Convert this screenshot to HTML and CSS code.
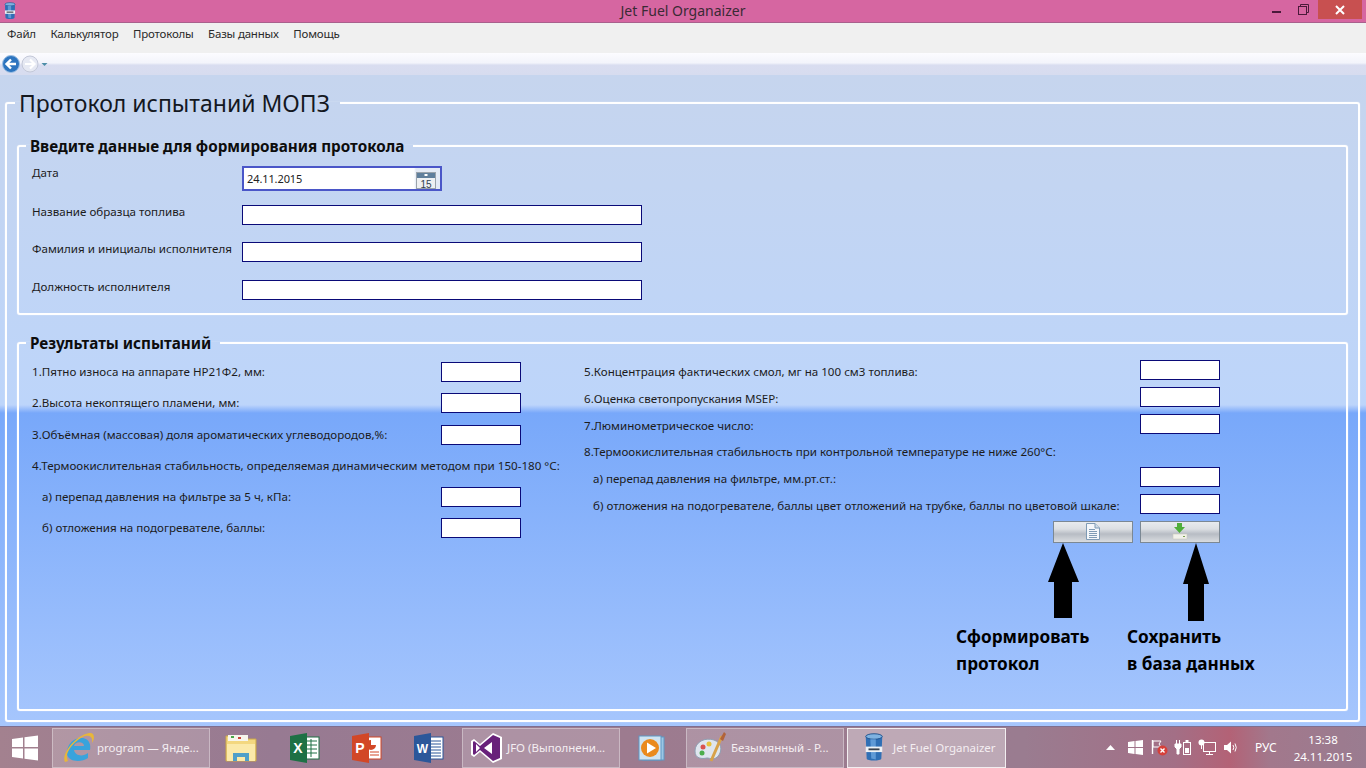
FILE: index.html
```html
<!DOCTYPE html>
<html lang="ru">
<head>
  <meta charset="UTF-8">
  <title>Jet Fuel Organaizer</title>
  <link rel="stylesheet" href="styles.css">
</head>
<body>
  <svg class="defs" width="0" height="0">
    <symbol id="barrel" viewBox="0 0 24 32">
      <path d="M3 4 C3 1 21 1 21 4 L20 28 C20 31 4 31 4 28 Z" fill="#2f6fb5"/>
      <ellipse cx="12" cy="4" rx="9" ry="3" fill="#7fb2e0" stroke="#1d4f8a"/>
      <path d="M8 7 L9 28 L14 29 L14 7 Z" fill="#5f9ad6"/>
      <rect x="3" y="15" width="18" height="6" fill="#eef2f6"/>
      <rect x="6" y="17" width="12" height="2" fill="#39414d"/>
    </symbol>
  </svg>

  <header class="titlebar">
    <div class="title-left">
      <svg class="app-icon" width="14" height="18"><use href="#barrel"/></svg>
    </div>
    <div class="title-text">Jet Fuel Organaizer</div>
    <div class="win-controls">
      <svg class="win-min" width="10" height="4" viewBox="0 0 10 4"><rect y="1" width="9" height="2" fill="#4a1a3a"/></svg>
      <svg class="win-max" width="11" height="11" viewBox="0 0 11 11">
        <path d="M2.5 2 V0.5 H10.5 V8.5 H9" fill="none" stroke="#4a1a3a"/>
        <rect x="0.5" y="2.5" width="8" height="8" fill="none" stroke="#4a1a3a"/>
      </svg>
      <div class="win-close">
        <svg width="10" height="10" viewBox="0 0 10 10"><path d="M1 1 L9 9 M9 1 L1 9" stroke="#fff" stroke-width="2"/></svg>
      </div>
    </div>
  </header>

  <nav class="menubar">
    <span>Файл</span>
    <span>Калькулятор</span>
    <span>Протоколы</span>
    <span>Базы данных</span>
    <span>Помощь</span>
  </nav>

  <div class="toolbar">
    <svg width="50" height="20" viewBox="0 0 50 20">
      <circle cx="10" cy="10" r="8.5" fill="#2c74bf" stroke="#9dc0e4"/>
      <path d="M15 10 H6 M10 5.5 L5.5 10 L10 14.5" fill="none" stroke="#fff" stroke-width="2.4"/>
      <circle cx="29" cy="10" r="8" fill="#e6e9f3" stroke="#c3c8d8"/>
      <path d="M24 10 H33 M29 5.5 L33.5 10 L29 14.5" fill="none" stroke="#fff" stroke-width="2.2"/>
      <path d="M40.5 9 H46.5 L43.5 12 Z" fill="#4d8ea8"/>
    </svg>
  </div>

  <main class="content">
    <fieldset class="protocol">
      <legend>Протокол испытаний МОПЗ</legend>

      <fieldset class="section section-input">
        <legend>Введите данные для формирования протокола</legend>
        <div class="input-grid">
          <label>Дата</label>
          <div class="date-field">
            <span>24.11.2015</span>
            <svg width="20" height="17" viewBox="0 0 20 17">
              <rect x="0.5" y="0.5" width="19" height="16" fill="#eef0f2" stroke="#9aa3ab"/>
              <rect x="1" y="1" width="18" height="5" fill="#5f7f9c"/>
              <rect x="8.5" y="2" width="3" height="2" fill="#fff"/>
              <text x="10" y="15.5" class="cal-num">15</text>
            </svg>
          </div>
          <label>Название образца топлива</label>
          <input class="text-long" type="text">
          <label>Фамилия и инициалы исполнителя</label>
          <input class="text-long" type="text">
          <label>Должность исполнителя</label>
          <input class="text-long" type="text">
        </div>
      </fieldset>

      <fieldset class="section section-results">
        <legend>Результаты испытаний</legend>
        <div class="results">
          <div class="col col-left">
            <div class="row"><label>1.Пятно износа на аппарате HP21Ф2, мм:</label><input type="text"></div>
            <div class="row"><label>2.Высота некоптящего пламени, мм:</label><input type="text"></div>
            <div class="row"><label>3.Объёмная (массовая) доля ароматических углеводородов,%:</label><input type="text"></div>
            <div class="row"><label>4.Термоокислительная стабильность, определяемая динамическим методом при 150-180 °С:</label></div>
            <div class="row"><label class="sub">а) перепад давления на фильтре за 5 ч, кПа:</label><input type="text"></div>
            <div class="row"><label class="sub">б) отложения на подогревателе, баллы:</label><input type="text"></div>
          </div>
          <div class="col col-right">
            <div class="row"><label>5.Концентрация фактических смол, мг на 100 см3 топлива:</label><input type="text"></div>
            <div class="row"><label>6.Оценка светопропускания MSEP:</label><input type="text"></div>
            <div class="row"><label>7.Люминометрическое число:</label><input type="text"></div>
            <div class="row"><label>8.Термоокислительная стабильность при контрольной температуре не ниже 260°С:</label></div>
            <div class="row"><label class="sub">а) перепад давления на фильтре, мм.рт.ст.:</label><input type="text"></div>
            <div class="row"><label class="sub">б) отложения на подогревателе, баллы цвет отложений на трубке, баллы по цветовой шкале:</label><input type="text"></div>
            <div class="buttons">
              <button type="button">
                <svg width="14" height="17" viewBox="0 0 14 17">
                  <path d="M0.5 0.5 H9 L13.5 5 V16.5 H0.5 Z" fill="#f4f7fa" stroke="#7f9bb5"/>
                  <path d="M9 0.5 V5 H13.5" fill="#cfdbe6" stroke="#7f9bb5"/>
                  <path d="M3 6.5 H9 M3 8.5 H11 M3 10.5 H11 M3 12.5 H11 M3 14.5 H11" stroke="#7f9bb5"/>
                </svg>
              </button>
              <button type="button">
                <svg width="16" height="17" viewBox="0 0 16 17">
                  <path d="M5 0 H10 V4 H13 L7.5 10 L2 4 H5 Z" fill="#4fae3a"/>
                  <path d="M1 11 H15 V16 H1 Z" fill="#f1f1ea" stroke="#c9c9bd" stroke-width="0.6"/>
                  <rect x="11" y="13" width="2" height="1" fill="#79a04f"/>
                </svg>
              </button>
            </div>
          </div>
        </div>

        <svg class="arrow arrow-left" width="31" height="75" viewBox="0 0 31 75">
          <path d="M15 0 L31 39 H24 V75 H6 V39 H0 Z" fill="#000"/>
        </svg>
        <svg class="arrow arrow-right" width="26" height="78" viewBox="0 0 26 78">
          <path d="M13 0 L26 41 H21 V78 H5 V41 H0 Z" fill="#000"/>
        </svg>
        <div class="note note-left">Сформировать<br>протокол</div>
        <div class="note note-right">Сохранить<br>в база данных</div>
      </fieldset>
    </fieldset>
  </main>

  <footer class="taskbar">
    <svg class="start" width="26" height="26" viewBox="0 0 26 26">
      <path d="M0 4 L11 2.5 V12 H0 Z M12.5 2.3 L26 0.5 V12 H12.5 Z M0 13.5 H11 V23.5 L0 22 Z M12.5 13.5 H26 V25.5 L12.5 23.7 Z" fill="#fff"/>
    </svg>

    <div class="task task-open task-program">
      <svg width="34" height="34" viewBox="0 0 34 34">
        <path d="M5 22 C5 12 13 6 21 7 C28 8 29 15 28 19 H12 C13 25 21 26 26 22 V27 C19 32 5 31 5 22 Z M12 15 H22 C22 10 13 10 12 15 Z" fill="#39a3dc"/>
        <path d="M3 31 C-1 24 12 5 27 2 C33 1 33 8 30 12 C31 6 28 4 23 5 C14 8 1 22 6 30 Z" fill="#e8b63a"/>
      </svg>
      <span>program — Янде...</span>
    </div>

    <div class="pin pin-folder">
      <svg width="32" height="30" viewBox="0 0 32 30">
        <path d="M1 3 H13 L15 6 H31 V28 H1 Z" fill="#f3d77f" stroke="#c9a64a"/>
        <rect x="3" y="2" width="20" height="6" fill="#f7f5ec"/>
        <rect x="6" y="3" width="3" height="2" fill="#4aa84a"/>
        <rect x="13" y="4" width="3" height="2" fill="#c8483c"/>
        <path d="M2 11 H30 V28 H2 Z" fill="#fbe9a9"/>
        <path d="M8 28 V20 H24 V28 H20 V24 H12 V28 Z" fill="#4f9fc9"/>
      </svg>
    </div>
    <div class="pin pin-excel">
      <svg width="30" height="30" viewBox="0 0 30 30">
        <rect x="13" y="4" width="16" height="22" fill="#fff" stroke="#1e7145"/>
        <path d="M16 8 H27 M16 12 H27 M16 16 H27 M16 20 H27 M21 6 V24" stroke="#1e7145"/>
        <path d="M0 3 L17 0 V30 L0 27 Z" fill="#1e7145"/>
        <text x="8" y="20" class="office-letter">X</text>
      </svg>
    </div>
    <div class="pin pin-ppt">
      <svg width="30" height="30" viewBox="0 0 30 30">
        <rect x="13" y="4" width="16" height="22" fill="#fff" stroke="#d24726"/>
        <path d="M19 7 A5 5 0 1 0 24 12 H19 Z" fill="#d24726"/>
        <path d="M18 19 H27 M18 22 H27" stroke="#d24726"/>
        <path d="M0 3 L17 0 V30 L0 27 Z" fill="#d24726"/>
        <text x="8" y="20" class="office-letter">P</text>
      </svg>
    </div>
    <div class="pin pin-word">
      <svg width="30" height="30" viewBox="0 0 30 30">
        <rect x="13" y="4" width="16" height="22" fill="#fff" stroke="#2b579a"/>
        <path d="M17 8 H27 M17 11 H27 M17 14 H27 M17 17 H27 M17 20 H27 M17 23 H27" stroke="#2b579a"/>
        <path d="M0 3 L17 0 V30 L0 27 Z" fill="#2b579a"/>
        <text x="8.5" y="20" class="office-letter office-w">W</text>
      </svg>
    </div>

    <div class="task task-open task-vs">
      <svg width="32" height="32" viewBox="0 0 32 32">
        <path d="M22 1 L31 5 V27 L22 31 L9 20 L3 25 L0 23 V9 L3 7 L9 12 Z" fill="#fff"/>
        <path d="M22 3 L29 6 V26 L22 29 L9 18 L3 23 L2 22 V10 L3 9 L9 14 Z" fill="#68217a"/>
        <path d="M21 10 V22 L13 16 Z M5 12 L9 16 L5 20 Z" fill="#fff"/>
      </svg>
      <span>JFO (Выполнени...</span>
    </div>

    <div class="pin pin-media">
      <svg width="28" height="28" viewBox="0 0 28 28">
        <rect x="6" y="3" width="21" height="23" fill="#9cc6e4" stroke="#5e97c3"/>
        <rect x="2" y="2" width="22" height="24" fill="#cfe3f2" stroke="#5e97c3"/>
        <circle cx="13" cy="14" r="9" fill="#ea8a1e"/>
        <path d="M10 8.5 L19 14 L10 19.5 Z" fill="#fff"/>
      </svg>
    </div>

    <div class="task task-open task-paint">
      <svg width="34" height="34" viewBox="0 0 34 34">
        <path d="M2 20 C2 11 12 6 21 9 C29 12 29 19 26 24 C22 30 17 27 14 27 C9 28 2 28 2 20 Z" fill="#dfe6ee" stroke="#8fa0b3"/>
        <circle cx="10" cy="16" r="2.5" fill="#d9534f"/>
        <circle cx="16" cy="13" r="2.5" fill="#e8c23d"/>
        <circle cx="9" cy="22" r="2.5" fill="#4cae4c"/>
        <path d="M18 30 L29 5" stroke="#d7a24a" stroke-width="3"/>
        <path d="M27 8 L31 1 L33 3 L30 10 Z" fill="#b2633a"/>
      </svg>
      <span>Безымянный - Р...</span>
    </div>

    <div class="task task-active">
      <svg width="22" height="33"><use href="#barrel"/></svg>
      <span>Jet Fuel Organaizer</span>
    </div>

    <div class="tray">
      <svg class="tray-up" width="9" height="5" viewBox="0 0 9 5"><path d="M0 5 L4.5 0 L9 5 Z" fill="#fff"/></svg>
      <svg class="tray-win" width="15" height="15" viewBox="0 0 15 15">
        <path d="M0 2 L6.5 1 V7 H0 Z M7.5 1 L15 0 V7 H7.5 Z M0 8 H6.5 V14 L0 13 Z M7.5 8 H15 V15 L7.5 14 Z" fill="#fff"/>
      </svg>
      <svg class="tray-flag" width="17" height="17" viewBox="0 0 17 17">
        <path d="M1.5 1 V15" stroke="#fff" stroke-width="1.4"/>
        <path d="M2 2 H10 L8 5 L10 8 H2 Z" fill="none" stroke="#fff"/>
        <circle cx="11.5" cy="11.5" r="5" fill="#d6403a"/>
        <path d="M9.5 9.5 L13.5 13.5 M13.5 9.5 L9.5 13.5" stroke="#fff" stroke-width="1.4"/>
      </svg>
      <svg class="tray-power" width="18" height="17" viewBox="0 0 18 17">
        <path d="M1 5 H7 V8 L5 10 V15 H3 V10 L1 8 Z M2.5 1 V5 M5.5 1 V5" fill="#fff" stroke="#fff"/>
        <rect x="9.5" y="3.5" width="7" height="12" fill="none" stroke="#fff"/>
        <rect x="11.5" y="1" width="3" height="2" fill="#fff"/>
        <rect x="11" y="9" width="4" height="5" fill="#fff"/>
      </svg>
      <svg class="tray-net" width="18" height="17" viewBox="0 0 18 17">
        <rect x="5.5" y="3.5" width="12" height="9" fill="none" stroke="#fff"/>
        <path d="M11.5 13 V15 M8 15.5 H15" stroke="#fff"/>
        <circle cx="3.5" cy="3.5" r="3" fill="#fff"/>
        <path d="M3.5 6 V10" stroke="#fff"/>
      </svg>
      <svg class="tray-sound" width="15" height="15" viewBox="0 0 15 15">
        <path d="M0 5 H3 L7 1.5 V13.5 L3 10 H0 Z" fill="#fff"/>
        <path d="M9 5 Q10.5 7.5 9 10 M11 3.5 Q13.5 7.5 11 11.5" fill="none" stroke="#fff"/>
      </svg>
      <span class="tray-lang">РУС</span>
      <div class="clock">
        <span>13:38</span>
        <span>24.11.2015</span>
      </div>
    </div>
  </footer>
</body>
</html>
```

FILE: styles.css
```css
* {
  box-sizing: border-box;
}

html, body {
  height: 100%;
}

body {
  margin: 0;
  width: 1366px;
  height: 768px;
  overflow: hidden;
  display: flex;
  flex-direction: column;
  font-family: "Noto Sans", "Open Sans", sans-serif;
  color: #1a1a1a;
}

.defs {
  position: absolute;
}

/* window chrome */
.titlebar {
  height: 23px;
  flex: none;
  display: grid;
  grid-template-columns: 1fr auto 1fr;
  align-items: start;
  background: #d666a1;
  border-bottom: 1px solid #a9608d;
}

.title-left {
  padding: 2px 0 0 3px;
}

.app-icon {
  display: block;
}

.title-text {
  font-size: 14px;
  line-height: 22px;
  color: #3a2a35;
}

.win-controls {
  display: flex;
  justify-content: flex-end;
  align-items: flex-start;
  padding-right: 4px;
}

.win-min {
  margin: 10px 16px 0 0;
}

.win-max {
  margin: 4px 9px 0 0;
}

.win-close {
  width: 44px;
  height: 19px;
  display: flex;
  align-items: center;
  justify-content: center;
  background: #c85050;
}

.menubar {
  height: 30px;
  flex: none;
  display: flex;
  gap: 14.5px;
  padding: 1px 0 0 7px;
  background: #f0f0f0;
  font-size: 11.5px;
  letter-spacing: -0.2px;
  line-height: 19px;
  color: #2b2b2b;
}

.toolbar {
  height: 22px;
  flex: none;
  padding: 1px 0 0 1px;
  background: linear-gradient(#fcfcff 0%, #f3f4fb 45%, #d9ddf0 55%, #d7dcef 100%);
}

.toolbar svg {
  display: block;
}

/* main area */
.content {
  flex: 1;
  min-height: 0;
  display: flex;
  padding: 12px 6px 4px 5px;
  background: linear-gradient(#c6d5ee 0, #bdd5fa 328px, #bcd4fb 330px, #78a8fa 338px, #a6c6fd 100%);
}

fieldset {
  margin: 0;
  min-width: 0;
  border: 2px solid #fff;
  border-radius: 3px;
  box-shadow: 0 0 1px #fff;
}

.protocol {
  flex: 1;
  display: flex;
  flex-direction: column;
  gap: 18px;
  padding: 17px 10px 9px 10px;
}

.protocol > legend {
  margin-left: -2px;
  padding: 0 10px 0 4px;
  font-size: 23px;
  line-height: 32px;
  color: #14181f;
}

.section {
  padding: 0 0 0 13px;
}

.section > legend {
  margin-left: -6px;
  padding: 0 9px 0 4px;
  font-size: 15.25px;
  font-weight: 700;
  line-height: 20px;
  color: #0d0d0d;
}

label {
  font-size: 11.6px;
  line-height: 14px;
  color: #1c1c1c;
}

input {
  display: block;
  width: 80px;
  height: 20px;
  margin: 0;
  padding: 0 4px;
  border: 1px solid #0a0a78;
  background: #fff;
  border-radius: 0;
}

/* first block */
.section-input {
  height: 179px;
}

.input-grid {
  display: grid;
  grid-template-columns: 210px 400px;
  grid-template-rows: 39px 37px 38px 20px;
  padding-top: 10px;
}

.text-long {
  width: 400px;
}

.date-field {
  width: 200px;
  height: 25px;
  display: flex;
  align-items: center;
  justify-content: space-between;
  padding: 0 4px 0 3px;
  border: 2px solid #4a56c8;
  background: linear-gradient(90deg, #fff 0, #fff 170px, #e4ebf6 172px);
  font-size: 11px;
  letter-spacing: -0.1px;
  color: #222;
}

.date-field svg {
  margin-top: 3px;
}

.cal-num {
  font-family: "Liberation Sans", sans-serif;
  font-size: 10px;
  text-anchor: middle;
  fill: #33424f;
}

/* second block */
.section-results {
  flex: 1;
  position: relative;
}

.results {
  display: flex;
  padding-top: 3px;
}

.row {
  display: flex;
  align-items: center;
}

.col-left {
  width: 552px;
  padding-top: 0.4px;
}

.col-left .row {
  height: 31.25px;
}

.col-left label {
  width: 409px;
  flex: none;
}

.col-left label:only-child {
  white-space: nowrap;
}

.col-right {
  width: 636px;
  padding-top: 4px;
}

.col-right .row {
  height: 26.8px;
  align-items: flex-start;
}

.col-right label {
  flex: 1;
  padding-top: 5px;
  white-space: nowrap;
}

.sub {
  padding-left: 10px;
}

.col-right .sub {
  padding-left: 9px;
}

.buttons {
  display: flex;
  justify-content: flex-end;
  gap: 7px;
}

.buttons button {
  width: 80px;
  height: 22px;
  padding: 0;
  display: flex;
  align-items: center;
  justify-content: center;
  border: 1px solid #7b8894;
  background: linear-gradient(#e8ebee 0%, #dcdfe3 35%, #b7bcc4 60%, #d9dce0 100%);
}

.arrow {
  position: absolute;
}

.arrow-left {
  left: 1029px;
  top: 190px;
}

.arrow-right {
  left: 1164px;
  top: 190px;
}

.note {
  position: absolute;
  top: 270px;
  font-size: 17.2px;
  font-weight: 700;
  line-height: 27px;
  color: #000;
  white-space: nowrap;
}

.note-left {
  left: 937px;
}

.note-right {
  left: 1108px;
}

/* taskbar */
.taskbar {
  height: 42px;
  flex: none;
  display: flex;
  align-items: center;
  border-top: 1px solid #7f6f90;
  background: linear-gradient(90deg, #a3818f 0, #977a92 20%, #9d7b8f 45%, #9a7c90 75%, #a36f86 86%, #b36276 90%, #a2788c 93%, #9a7c90 100%);
  color: #fff;
}

.start {
  flex: none;
  margin: 0 14px 0 12px;
}

.task {
  flex: none;
  width: 158px;
  height: 40px;
  display: flex;
  align-items: center;
  border: 1px solid rgba(255, 255, 255, 0.35);
  background: rgba(255, 255, 255, 0.18);
  font-size: 11.5px;
  white-space: nowrap;
}

.task span {
  color: #f4eef2;
}

.task-program {
  gap: 1px;
  padding-left: 9px;
}

.task-vs {
  gap: 4px;
  margin-left: 2px;
  padding-left: 8px;
}

.task-paint {
  gap: 4px;
  margin-left: 4px;
  padding-left: 6px;
}

.task-active {
  width: 159px;
  gap: 8px;
  margin-left: 3px;
  padding-left: 15px;
  border-color: rgba(255, 255, 255, 0.8);
  background: rgba(255, 255, 255, 0.35);
}

.pin {
  flex: none;
  width: 62px;
  display: flex;
  justify-content: center;
}

.pin-excel {
  margin-left: 2px;
}

.office-letter {
  font-family: "Liberation Sans", sans-serif;
  font-size: 14px;
  font-weight: 700;
  text-anchor: middle;
  fill: #fff;
}

.office-w {
  font-size: 12px;
}

.tray {
  flex: 1;
  display: flex;
  align-items: center;
  padding-left: 100px;
}

.tray svg {
  flex: none;
}

.tray-win {
  margin-left: 13px;
}

.tray-flag {
  margin-left: 8px;
}

.tray-power {
  margin-left: 6px;
}

.tray-net {
  margin-left: 6px;
}

.tray-sound {
  margin-left: 8px;
}

.tray-lang {
  margin-left: 16px;
  font-size: 12px;
}

.clock {
  margin-left: 17px;
  display: flex;
  flex-direction: column;
  align-items: center;
  font-size: 11.5px;
  line-height: 17px;
}
```
